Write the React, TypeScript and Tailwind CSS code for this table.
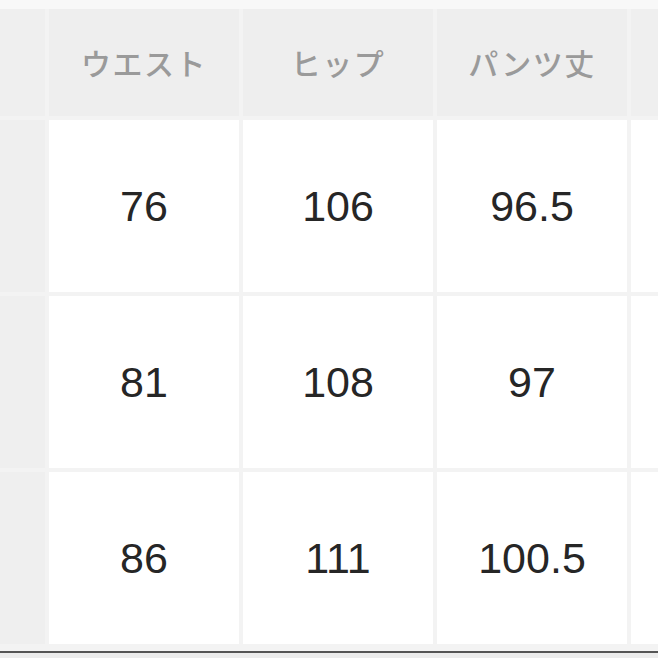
const headers = ['ウエスト', 'ヒップ', 'パンツ丈']

const rows = [
  ['76', '106', '96.5'],
  ['81', '108', '97'],
  ['86', '111', '100.5'],
]

export default function App() {
  return (
    <div className="w-[658px] h-[658px] overflow-hidden bg-[#f3f3f3] flex flex-col">
      <div className="h-[9px] bg-[#f8f8f8]" />
      <div className="grid grid-cols-[45px_190px_190px_190px_190px] grid-rows-[107px_172px_172px_172px] gap-[4px]">
        {/* header */}
        <div className="bg-[#efefef]" />
        {headers.map((h) => (
          <div
            key={h}
            className="bg-[#eeeeee] flex items-center justify-center text-[30px] font-medium tracking-[1.5px] text-[#9a9a9a]"
            style={{ fontFamily: '"Noto Sans CJK JP", "Noto Sans", sans-serif' }}
          >
            {h}
          </div>
        ))}
        <div className="bg-[#efefef]" />

        {rows.map((r, i) => (
          <>
            <div key={`l${i}`} className="bg-[#efefef]" />
            {r.map((v, j) => (
              <div
                key={`${i}-${j}`}
                className="bg-white flex items-center justify-center text-[43px] text-[#262626]"
                style={{ fontFamily: '"Liberation Sans", Arial, sans-serif' }}
              >
                {v}
              </div>
            ))}
            <div key={`r${i}`} className="bg-white" />
          </>
        ))}
      </div>
      <div className="h-[6px] mt-[1px] bg-[#f3f3f3]" />
      <div className="h-[2px] bg-[#555555]" />
      <div className="flex-1 bg-[#ececec]" />
    </div>
  )
}
